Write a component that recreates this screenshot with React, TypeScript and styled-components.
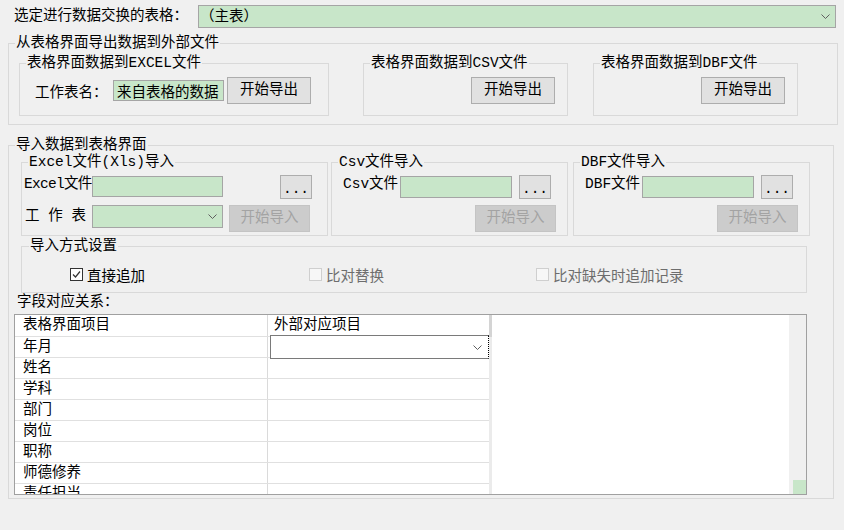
import React from "react";
import styled, { createGlobalStyle } from "styled-components";

const GREEN = "#c8e6c9";

const GlobalStyle = createGlobalStyle`
  html, body {
    margin: 0;
    padding: 0;
    background: #f0f0f0;
  }
  body {
    font-family: "Liberation Mono", "Noto Sans CJK SC", monospace;
    font-size: 14.5px;
    color: #000;
  }
  * {
    box-sizing: border-box;
  }
`;

type Size = { $w: number; $h: number; $ml?: number; $mt?: number };

function Chevron() {
    return (
        <svg width={9} height={5} viewBox="0 0 9 5">
            <polyline points="0.5,0.5 4.5,4.5 8.5,0.5" fill="none" stroke="#5f5f5f" strokeWidth="1" />
        </svg>
    );
}

function CheckMark() {
    return (
        <svg width={9} height={9} viewBox="0 0 9 9">
            <polyline points="1,4.5 3.5,7 8,1.5" fill="none" stroke="#333" strokeWidth="1.2" />
        </svg>
    );
}

function App() {
    const rows = ["年月", "姓名", "学科", "部门", "岗位", "职称", "师德修养", "责任担当"];
    return (
        <Page>
            <GlobalStyle />
            <TopRow>
                <TopLabel>选定进行数据交换的表格：</TopLabel>
                <Combo $w={638} $h={23}>
                    <ComboText>（主表）</ComboText>
                    <Chevron />
                </Combo>
            </TopRow>

            <Group $w={830} $ml={8} $mt={7}>
                <Legend>从表格界面导出数据到外部文件</Legend>
                <ExportBody>
                    <Group $w={310} $ml={0} $mt={0}>
                        <Legend>表格界面数据到EXCEL文件</Legend>
                        <SubBody $pl={15}>
                            <SheetLabel>工作表名：</SheetLabel>
                            <TextField $w={111} $h={21} value="来自表格的数据" readOnly />
                            <Button $w={84} $h={27} $ml={3}>开始导出</Button>
                        </SubBody>
                    </Group>
                    <Group $w={205} $ml={34} $mt={0}>
                        <Legend>表格界面数据到CSV文件</Legend>
                        <SubBody $pl={0} $end>
                            <Button $w={84} $h={27}>开始导出</Button>
                        </SubBody>
                    </Group>
                    <Group $w={205} $ml={25} $mt={0}>
                        <Legend>表格界面数据到DBF文件</Legend>
                        <SubBody $pl={0} $end>
                            <Button $w={84} $h={27}>开始导出</Button>
                        </SubBody>
                    </Group>
                </ExportBody>
            </Group>

            <Group $w={826} $ml={8} $mt={12}>
                <Legend>导入数据到表格界面</Legend>
                <ImportBody>
                    <ImportRow>
                        <Group $w={307} $ml={0} $mt={0}>
                            <Legend>Excel文件(Xls)导入</Legend>
                            <ImpBody $pl={2}>
                                <FileRow>
                                    <FileLabel $w={68} $tight>Excel文件</FileLabel>
                                    <TextField $w={131} $h={21} $mt={1} readOnly />
                                    <DotsButton $w={32} $h={24} $ml={57}>...</DotsButton>
                                </FileRow>
                                <ActionRow>
                                    <SheetPick>工 作 表</SheetPick>
                                    <Combo $w={131} $h={23}>
                                        <ComboText />
                                        <Chevron />
                                    </Combo>
                                    <Button $w={81} $h={27} $ml={6} disabled>开始导入</Button>
                                </ActionRow>
                            </ImpBody>
                        </Group>
                        <Group $w={237} $ml={3} $mt={0}>
                            <Legend>Csv文件导入</Legend>
                            <ImpBody $pl={11}>
                                <FileRow>
                                    <FileLabel $w={57}>Csv文件</FileLabel>
                                    <TextField $w={112} $h={22} $mt={1} readOnly />
                                    <DotsButton $w={32} $h={24} $ml={7}>...</DotsButton>
                                </FileRow>
                                <ActionRow $end>
                                    <Button $w={81} $h={27} disabled>开始导入</Button>
                                </ActionRow>
                            </ImpBody>
                        </Group>
                        <Group $w={237} $ml={5} $mt={0}>
                            <Legend>DBF文件导入</Legend>
                            <ImpBody $pl={11}>
                                <FileRow>
                                    <FileLabel $w={57}>DBF文件</FileLabel>
                                    <TextField $w={112} $h={22} $mt={1} readOnly />
                                    <DotsButton $w={32} $h={24} $ml={7}>...</DotsButton>
                                </FileRow>
                                <ActionRow $end>
                                    <Button $w={81} $h={27} disabled>开始导入</Button>
                                </ActionRow>
                            </ImpBody>
                        </Group>
                    </ImportRow>

                    <Group $w={786} $ml={7} $mt={2}>
                        <Legend $ml={7}>导入方式设置</Legend>
                        <ModeBody>
                            <CheckItem $w={239}>
                                <CheckBox><CheckMark /></CheckBox>
                                直接追加
                            </CheckItem>
                            <CheckItem $w={227} $off>
                                <CheckBox $off />
                                比对替换
                            </CheckItem>
                            <CheckItem $off>
                                <CheckBox $off />
                                比对缺失时追加记录
                            </CheckItem>
                        </ModeBody>
                    </Group>

                    <FieldLabel>字段对应关系：</FieldLabel>
                    <Grid>
                        <Columns>
                            <GridRow $h={22}>
                                <Cell $w={253} $pl={8} $line>表格界面项目</Cell>
                                <Cell $w={221} $pl={6}>外部对应项目</Cell>
                            </GridRow>
                            {rows.map((name, i) => (
                                <GridRow key={name} $h={21}>
                                    <Cell $w={253} $pl={8} $line>{name}</Cell>
                                    <Cell $w={221} $pl={6}>
                                        {i === 0 && (
                                            <Editor>
                                                <Chevron />
                                            </Editor>
                                        )}
                                    </Cell>
                                </GridRow>
                            ))}
                        </Columns>
                        <Splitter />
                        <Blank />
                        <ScrollTrack>
                            <Thumb />
                        </ScrollTrack>
                    </Grid>
                </ImportBody>
            </Group>
        </Page>
    );
}

const Page = styled.div`
    width: 844px;
    height: 530px;
    overflow: hidden;
`;

const TopRow = styled.div`
    display: flex;
    align-items: center;
    height: 23px;
    margin-top: 5px;
    padding-left: 14px;
`;

const TopLabel = styled.div`
    width: 184px;
    line-height: 23px;
    white-space: nowrap;
`;

const Combo = styled.div<Size>`
    display: flex;
    align-items: center;
    justify-content: space-between;
    width: ${p => p.$w}px;
    height: ${p => p.$h}px;
    margin-left: ${p => p.$ml ?? 0}px;
    padding: 0 5px 0 1px;
    background: ${GREEN};
    border: 1px solid #a5a5a5;
`;

const ComboText = styled.span`
    line-height: 20px;
    white-space: nowrap;
`;

const Group = styled.fieldset<{ $w: number; $ml: number; $mt: number }>`
    width: ${p => p.$w}px;
    min-width: 0;
    margin: ${p => p.$mt}px 0 0 ${p => p.$ml}px;
    padding: 0;
    border: 1px solid #d9d9d9;
    flex-shrink: 0;
`;

const Legend = styled.legend<{ $ml?: number }>`
    margin-left: ${p => p.$ml ?? 6}px;
    padding: 0 1px;
    line-height: 16px;
    white-space: nowrap;
`;

const ExportBody = styled.div`
    display: flex;
    align-items: flex-start;
    padding: 4px 0 8px 10px;
`;

const SubBody = styled.div<{ $pl: number; $end?: boolean }>`
    display: flex;
    align-items: center;
    justify-content: ${p => (p.$end ? "flex-end" : "flex-start")};
    padding: 6px 12px 11px ${p => p.$pl}px;
`;

const SheetLabel = styled.div`
    width: 78px;
    white-space: nowrap;
`;

const TextField = styled.input<Size>`
    width: ${p => p.$w}px;
    height: ${p => p.$h}px;
    margin: ${p => p.$mt ?? 0}px 0 0 ${p => p.$ml ?? 0}px;
    padding: 0 0 0 3px;
    font: inherit;
    color: #000;
    background: ${GREEN};
    border: 1px solid #a5a5a5;
    outline: none;
    flex-shrink: 0;
`;

const Button = styled.button<Size>`
    width: ${p => p.$w}px;
    height: ${p => p.$h}px;
    margin: 0 0 0 ${p => p.$ml ?? 0}px;
    padding: 0;
    font: inherit;
    line-height: 25px;
    color: #000;
    background: #e1e1e1;
    border: 1px solid #adadad;
    flex-shrink: 0;

    &:disabled {
        color: #a3a3a3;
        background: #cccccc;
        border-color: #c4c4c4;
    }
`;

const DotsButton = styled(Button)`
    line-height: 26px;
`;

const ImportBody = styled.div`
    display: flex;
    flex-direction: column;
    align-items: flex-start;
    padding: 0 0 3px 5px;
`;

const ImportRow = styled.div`
    display: flex;
    margin: 1px 0 0 7px;
`;

const ImpBody = styled.div<{ $pl: number }>`
    display: flex;
    flex-direction: column;
    padding: 5px 11px 3px ${p => p.$pl}px;
`;

const FileRow = styled.div`
    display: flex;
    align-items: flex-start;
    height: 24px;
`;

const FileLabel = styled.div<{ $w: number; $tight?: boolean }>`
    width: ${p => p.$w}px;
    line-height: 18px;
    letter-spacing: ${p => (p.$tight ? "-0.7px" : "0")};
    white-space: nowrap;
    flex-shrink: 0;
`;

const ActionRow = styled.div<{ $end?: boolean }>`
    display: flex;
    align-items: flex-start;
    justify-content: ${p => (p.$end ? "flex-end" : "flex-start")};
    height: 27px;
    margin-top: 6px;
`;

const SheetPick = styled.div`
    width: 68px;
    padding-left: 1px;
    line-height: 23px;
    white-space: pre;
`;

const ModeBody = styled.div`
    display: flex;
    align-items: center;
    height: 38px;
    padding: 10px 0 8px 48px;
`;

const CheckItem = styled.div<{ $w?: number; $off?: boolean }>`
    display: flex;
    align-items: center;
    width: ${p => (p.$w ? `${p.$w}px` : "auto")};
    height: 20px;
    color: ${p => (p.$off ? "#6d6d6d" : "#000")};
    white-space: nowrap;
`;

const CheckBox = styled.span<{ $off?: boolean }>`
    display: flex;
    align-items: center;
    justify-content: center;
    width: 13px;
    height: 13px;
    margin-right: 4px;
    background: ${p => (p.$off ? "#f7f7f7" : "#fff")};
    border: 1px solid ${p => (p.$off ? "#cfcfcf" : "#333")};
`;

const FieldLabel = styled.div`
    margin: 1px 0 0 3px;
    line-height: 16px;
`;

const Grid = styled.div`
    display: flex;
    width: 793px;
    height: 181px;
    margin-top: 4px;
    background: #fff;
    border: 1px solid #a0a0a0;
    overflow: hidden;
`;

const Columns = styled.div`
    width: 474px;
    flex-shrink: 0;
`;

const GridRow = styled.div<{ $h: number }>`
    display: flex;
    height: ${p => p.$h}px;
    border-bottom: 1px solid #e0e0e0;
`;

const Cell = styled.div<{ $w: number; $pl: number; $line?: boolean }>`
    position: relative;
    width: ${p => p.$w}px;
    padding-left: ${p => p.$pl}px;
    line-height: 20px;
    white-space: nowrap;
    border-right: ${p => (p.$line ? "1px solid #dadada" : "none")};
`;

const Editor = styled.div`
    position: absolute;
    left: 2px;
    top: -2px;
    width: 219px;
    height: 24px;
    display: flex;
    align-items: center;
    justify-content: flex-end;
    padding-right: 6px;
    background: #fff;
    border: 1px solid #7a7a7a;
    border-right: 1px dotted #000;
`;

const Splitter = styled.div`
    width: 3px;
    flex-shrink: 0;
    background: linear-gradient(#d4d4d4 0 22px, #ebebeb 22px);
`;

const Blank = styled.div`
    flex: 1;
`;

const ScrollTrack = styled.div`
    display: flex;
    align-items: flex-end;
    justify-content: flex-end;
    width: 17px;
    flex-shrink: 0;
    background: #f0f0f0;
`;

const Thumb = styled.div`
    width: 13px;
    height: 14px;
    background: ${GREEN};
`;

export default App;
